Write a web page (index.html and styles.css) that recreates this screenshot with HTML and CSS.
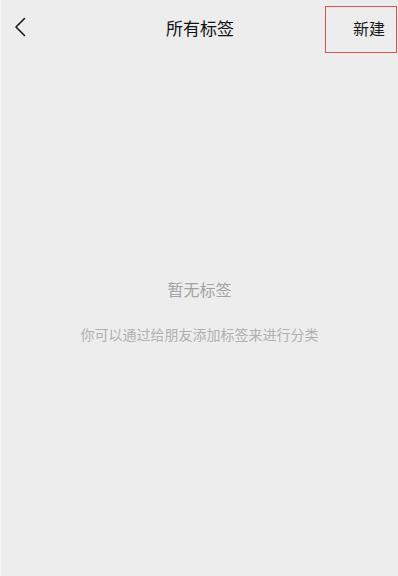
FILE: index.html
```html
<!DOCTYPE html>
<html lang="zh">
<head>
<meta charset="utf-8">
<title>所有标签</title>
<link rel="stylesheet" href="styles.css">
</head>
<body>
<div class="page">
  <header class="nav">
    <div class="nav-left">
      <svg class="back" width="12" height="20" viewBox="0 0 12 20"><path d="M10.5 1.5 L2 10 L10.5 18.5" fill="none" stroke="#1a1a1a" stroke-width="1.6" stroke-linecap="round" stroke-linejoin="round"/></svg>
    </div>
    <h1 class="title">所有标签</h1>
    <div class="nav-right">
      <span class="new-btn">新建</span>
    </div>
  </header>
  <main class="empty">
    <p class="empty-title">暂无标签</p>
    <p class="empty-desc">你可以通过给朋友添加标签来进行分类</p>
  </main>
</div>
</body>
</html>
```
FILE: styles.css
```css
html, body {
  margin: 0;
  padding: 0;
  background: #ededed;
}
body {
  font-family: "Noto Sans CJK SC", "Noto Sans", sans-serif;
  width: 398px;
  height: 576px;
  overflow: hidden;
}
.page {
  height: 576px;
  display: flex;
  flex-direction: column;
  border-left: 1px solid #f4f4f4;
  box-sizing: border-box;
}
.nav {
  height: 54px;
  display: grid;
  grid-template-columns: 1fr auto 1fr;
  align-items: center;
  flex-shrink: 0;
}
.nav-left {
  padding-left: 13px;
  display: flex;
  align-items: center;
}
.back {
  display: block;
}
.title {
  margin: 0;
  font-size: 17px;
  font-weight: 400;
  color: #111;
  line-height: 1;
  padding-left: 1px;
}
.nav-right {
  align-self: start;
  display: flex;
  justify-content: flex-end;
  padding-top: 6px;
  padding-right: 1px;
}
.new-btn {
  width: 72px;
  height: 47px;
  box-sizing: border-box;
  border: 1.5px solid #d9534f;
  display: flex;
  align-items: center;
  justify-content: flex-end;
  padding-right: 11px;
  padding-bottom: 3px;
  font-size: 16px;
  color: #1a1a1a;
}
.empty {
  display: flex;
  flex-direction: column;
  align-items: center;
  padding-top: 223px;
}
.empty-title {
  margin: 0;
  font-size: 16px;
  color: #a3a3a3;
  line-height: 24px;
}
.empty-desc {
  margin: 22px 0 0;
  font-size: 14px;
  color: #b0b0b0;
  line-height: 22px;
}
```
